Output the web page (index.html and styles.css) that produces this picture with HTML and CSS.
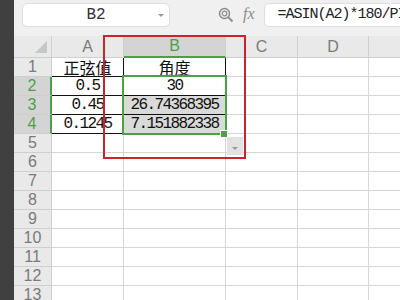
FILE: index.html
```html
<!DOCTYPE html>
<html lang="zh">
<head>
    <meta charset="UTF-8">
    <title>Sheet</title>
    <link rel="stylesheet" href="styles.css">
</head>
<body>
    <div class="app">
        <div class="side"></div>
        <div class="main">
            <div class="toolbar">
                <div class="namebox">
                    <span>B2</span>
                    <span class="caret"></span>
                </div>
                <svg class="zoom-icon" width="16" height="16" viewBox="0 0 16 16">
                    <circle cx="6.5" cy="6.5" r="5" fill="none" stroke="#8a8a8a" stroke-width="1.4"/>
                    <circle cx="6.5" cy="6.5" r="2.3" fill="none" stroke="#8a8a8a" stroke-width="1.2"/>
                    <line x1="10.2" y1="10.2" x2="14.5" y2="14.5" stroke="#8a8a8a" stroke-width="1.8"/>
                </svg>
                <span class="fx">fx</span>
                <div class="formula">=ASIN(A2)*180/PI()</div>
            </div>

            <div class="sheet">
                <!-- header row -->
                <div class="h corner"><span class="tri"></span></div>
                <div class="h">A</div>
                <div class="h hl">B</div>
                <div class="h">C</div>
                <div class="h">D</div>
                <div class="h"></div>

                <div class="rh">1</div>
                <div class="c bk cjk">正弦值</div>
                <div class="c bk cjk">角度</div>
                <div class="c"></div><div class="c"></div><div class="c"></div>

                <div class="rh hl">2</div>
                <div class="c bk num">0.5</div>
                <div class="c bk num">30</div>
                <div class="c"></div><div class="c"></div><div class="c"></div>

                <div class="rh hl">3</div>
                <div class="c bk num">0.45</div>
                <div class="c bk num gs">26.74368395</div>
                <div class="c"></div><div class="c"></div><div class="c"></div>

                <div class="rh hl">4</div>
                <div class="c bk num">0.1245</div>
                <div class="c bk num gs">7.151882338</div>
                <div class="c"></div><div class="c"></div><div class="c"></div>

                <div class="rh">5</div>
                <div class="c"></div><div class="c"></div><div class="c"></div><div class="c"></div><div class="c"></div>
                <div class="rh">6</div>
                <div class="c"></div><div class="c"></div><div class="c"></div><div class="c"></div><div class="c"></div>
                <div class="rh">7</div>
                <div class="c"></div><div class="c"></div><div class="c"></div><div class="c"></div><div class="c"></div>
                <div class="rh">8</div>
                <div class="c"></div><div class="c"></div><div class="c"></div><div class="c"></div><div class="c"></div>
                <div class="rh">9</div>
                <div class="c"></div><div class="c"></div><div class="c"></div><div class="c"></div><div class="c"></div>
                <div class="rh">10</div>
                <div class="c"></div><div class="c"></div><div class="c"></div><div class="c"></div><div class="c"></div>
                <div class="rh">11</div>
                <div class="c"></div><div class="c"></div><div class="c"></div><div class="c"></div><div class="c"></div>
                <div class="rh">12</div>
                <div class="c"></div><div class="c"></div><div class="c"></div><div class="c"></div><div class="c"></div>
                <div class="rh">13</div>
                <div class="c"></div><div class="c"></div><div class="c"></div><div class="c"></div><div class="c"></div>

                <!-- overlays -->
                <div class="selection"></div>
                <div class="fill-handle"></div>
                <div class="paste-btn"><span class="caret"></span></div>
                <div class="mark"></div>
            </div>
        </div>
    </div>
</body>
</html>
```

FILE: styles.css
```css
:root {
    --grid-line: #d6d6d6;
    --head-bg: #e9e9e9;
    --head-sel: #d4d4d4;
    --head-text: #7a7a7a;
    --green: #4d9f4a;
    --red: #c9232b;
}

* {
    box-sizing: border-box;
}

body {
    margin: 0;
    background: #ffffff;
    overflow: hidden;
}

.app {
    display: flex;
    width: 400px;
    height: 300px;
    overflow: hidden;
}

.side {
    width: 14px;
    flex: none;
    background: #404040;
}

.main {
    flex: 1;
    min-width: 0;
    overflow: hidden;
}

/* formula bar */
.toolbar {
    height: 36px;
    background: #f0f0f0;
    display: flex;
    align-items: flex-start;
    padding: 3px 0 0 8px;
}

.namebox {
    width: 148px;
    height: 24px;
    flex: none;
    background: #fff;
    border: 1px solid #dedede;
    border-radius: 5px;
    display: flex;
    align-items: center;
    justify-content: center;
    position: relative;
    font-family: "Liberation Mono", monospace;
    font-size: 16px;
    line-height: 1;
    color: #333;
}

.namebox .caret {
    position: absolute;
    right: 5px;
    top: 10px;
}

.caret {
    display: block;
    width: 0;
    height: 0;
    border-left: 3px solid transparent;
    border-right: 3px solid transparent;
    border-top: 3px solid #9a9a9a;
}

.zoom-icon {
    flex: none;
    margin: 4px 0 0 48px;
}

.fx {
    flex: none;
    margin: 2px 0 0 9px;
    font-family: "Liberation Serif", serif;
    font-style: italic;
    font-size: 16px;
    color: #8c8c8c;
}

.formula {
    flex: none;
    width: 200px;
    height: 24px;
    margin-left: 9px;
    background: #fff;
    border: 1px solid #dedede;
    border-radius: 5px;
    padding: 2px 0 0 13px;
    font-family: "Liberation Mono", monospace;
    font-size: 15px;
    letter-spacing: -1px;
    color: #222;
    white-space: nowrap;
    overflow: hidden;
}

/* grid */
.sheet {
    position: relative;
    display: grid;
    grid-template-columns: 38px 72px 102px 72px 71px 60px;
    grid-template-rows: 22px repeat(13, 19px);
}

.h,
.rh,
.c {
    border-right: 1px solid var(--grid-line);
    border-bottom: 1px solid var(--grid-line);
    display: flex;
    align-items: center;
    justify-content: center;
    white-space: nowrap;
    line-height: 1;
    overflow: hidden;
}

.h,
.rh {
    background: var(--head-bg);
    color: var(--head-text);
    font-family: "Liberation Sans", sans-serif;
    font-size: 16px;
    border-color: #cfcfcf;
}

.h.hl {
    background: var(--head-sel);
    color: var(--green);
    border-bottom: 2px solid var(--green);
}

.rh.hl {
    background: var(--head-sel);
    color: var(--green);
    border-right: 2px solid var(--green);
}

.corner {
    position: relative;
}

.tri {
    position: absolute;
    right: 4px;
    bottom: 4px;
    width: 0;
    height: 0;
    border-left: 12px solid transparent;
    border-bottom: 12px solid #c6c6c6;
}

.c {
    color: #111;
}

.c.bk {
    border-right-color: #111;
    border-bottom-color: #111;
}

.c.gs {
    background: #dadada;
}

.cjk {
    font-family: "Noto Sans CJK SC", sans-serif;
    font-size: 16px;
}

.num {
    font-family: "Liberation Mono", monospace;
    font-size: 16px;
    letter-spacing: -1.6px;
}

/* overlays */
.selection {
    position: absolute;
    left: 108px;
    top: 39px;
    width: 105px;
    height: 60px;
    border: 2px solid var(--green);
}

.fill-handle {
    position: absolute;
    left: 207px;
    top: 95px;
    width: 6px;
    height: 6px;
    background: var(--green);
    outline: 1px solid #fff;
}

.paste-btn {
    position: absolute;
    left: 213px;
    top: 101px;
    width: 16px;
    height: 18px;
    background: #e2e2e2;
    display: flex;
    align-items: flex-end;
    justify-content: center;
    padding-bottom: 5px;
}

.mark {
    position: absolute;
    left: 89px;
    top: -1px;
    width: 143px;
    height: 124px;
    border: 2px solid var(--red);
}
```
